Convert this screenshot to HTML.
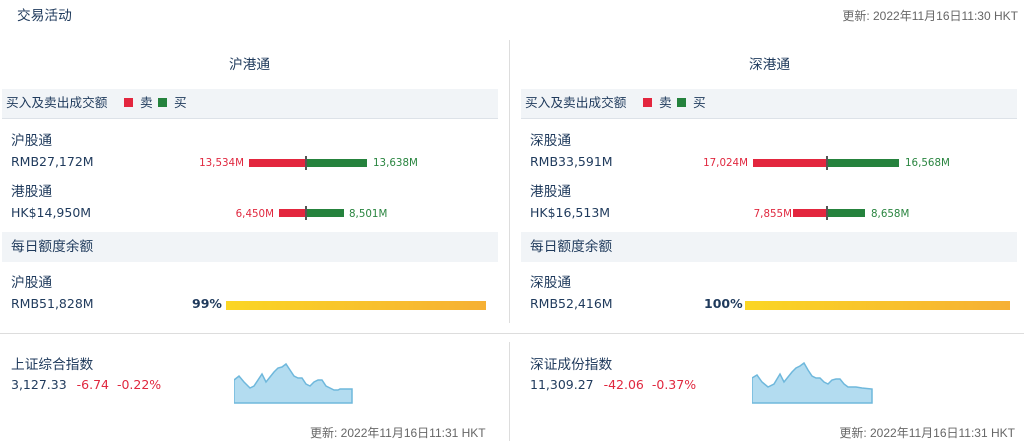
<!DOCTYPE html>
<html><head><meta charset="utf-8"><style>
*{margin:0;padding:0;box-sizing:border-box}
body{width:1024px;height:441px;background:#fff;font-family:"DejaVu Sans","Noto Sans CJK SC",sans-serif;color:#1f3a5c;position:relative;overflow:hidden;font-size:12.5px}
.a{position:absolute;white-space:nowrap;line-height:1}
.c{font-size:13.7px;margin-top:1px}
.band{position:absolute;background:#f1f4f7;height:30px}
.g{color:#666;font-size:12px;font-family:"Liberation Sans","Noto Sans CJK SC",sans-serif}
.r{color:#e0283f}.gr{color:#2a8540}
.sm{font-size:10.3px}
.bar{position:absolute;height:8px}
.red{background:#e3263e}.grn{background:#25823d}
.tick{position:absolute;width:2px;height:14px;background:#555}
.y{position:absolute;height:9px;background:linear-gradient(90deg,#fbd624,#f6b034)}
.vl{position:absolute;width:1px;background:#ddd}
.bl{font-size:12.7px}
</style></head><body>
<div class="a c" style="left:17px;top:9px">交易活动</div>
<div class="a g" style="right:6px;top:10px">更新: 2022年11月16日11:30 HKT</div>

<div class="vl" style="left:509px;top:40px;height:283px"></div>
<div style="position:absolute;left:0;top:333px;width:1024px;height:1px;background:#ddd"></div>
<div class="vl" style="left:509px;top:342px;height:99px"></div>

<!-- left -->
<div class="a c" style="left:229px;top:58px">沪港通</div>
<div class="band" style="left:2px;top:89px;width:496px;border-bottom:1px solid #dde2e8"></div>
<div class="a bl" style="left:6px;top:97px">买入及卖出成交额</div>
<div style="position:absolute;left:124px;top:98px;width:9px;height:9px;background:#e3263e"></div>
<div class="a bl" style="left:140px;top:97px">卖</div>
<div style="position:absolute;left:158px;top:98px;width:9px;height:9px;background:#25823d"></div>
<div class="a bl" style="left:174px;top:97px">买</div>
<div class="a c" style="left:11px;top:134px">沪股通</div>
<div class="a" style="left:11px;top:156px">RMB27,172M</div>
<div class="a sm r" style="right:780px;top:158px">13,534M</div>
<div class="bar red" style="left:249px;top:159px;width:57px"></div>
<div class="bar grn" style="left:306px;top:159px;width:61px"></div>
<div class="tick" style="left:305px;top:156px"></div>
<div class="a sm gr" style="left:373px;top:158px">13,638M</div>
<div class="a c" style="left:11px;top:185px">港股通</div>
<div class="a" style="left:11px;top:207px">HK$14,950M</div>
<div class="a sm r" style="right:750px;top:209px">6,450M</div>
<div class="bar red" style="left:279px;top:209px;width:27px"></div>
<div class="bar grn" style="left:306px;top:209px;width:38px"></div>
<div class="tick" style="left:305px;top:206px"></div>
<div class="a sm gr" style="left:349px;top:209px">8,501M</div>
<div class="band" style="left:2px;top:232px;width:496px"></div>
<div class="a c" style="left:11px;top:240px">每日额度余额</div>
<div class="a c" style="left:11px;top:276px">沪股通</div>
<div class="a" style="left:11px;top:298px">RMB51,828M</div>
<div class="a" style="left:192px;top:298px;font-weight:bold">99%</div>
<div class="y" style="left:226px;top:301px;width:260px"></div>

<!-- right -->
<div class="a c" style="left:749px;top:58px">深港通</div>
<div class="band" style="left:521px;top:89px;width:496px;border-bottom:1px solid #dde2e8"></div>
<div class="a bl" style="left:525px;top:97px">买入及卖出成交额</div>
<div style="position:absolute;left:643px;top:98px;width:9px;height:9px;background:#e3263e"></div>
<div class="a bl" style="left:659px;top:97px">卖</div>
<div style="position:absolute;left:677px;top:98px;width:9px;height:9px;background:#25823d"></div>
<div class="a bl" style="left:693px;top:97px">买</div>
<div class="a c" style="left:530px;top:134px">深股通</div>
<div class="a" style="left:530px;top:156px">RMB33,591M</div>
<div class="a sm r" style="right:276px;top:158px">17,024M</div>
<div class="bar red" style="left:753px;top:159px;width:74px"></div>
<div class="bar grn" style="left:827px;top:159px;width:72px"></div>
<div class="tick" style="left:826px;top:156px"></div>
<div class="a sm gr" style="left:905px;top:158px">16,568M</div>
<div class="a c" style="left:530px;top:185px">港股通</div>
<div class="a" style="left:530px;top:207px">HK$16,513M</div>
<div class="a sm r" style="right:232px;top:209px">7,855M</div>
<div class="bar red" style="left:793px;top:209px;width:34px"></div>
<div class="bar grn" style="left:827px;top:209px;width:38px"></div>
<div class="tick" style="left:826px;top:206px"></div>
<div class="a sm gr" style="left:871px;top:209px">8,658M</div>
<div class="band" style="left:521px;top:232px;width:496px"></div>
<div class="a c" style="left:530px;top:240px">每日额度余额</div>
<div class="a c" style="left:530px;top:276px">深股通</div>
<div class="a" style="left:530px;top:298px">RMB52,416M</div>
<div class="a" style="left:704px;top:298px;font-weight:bold">100%</div>
<div class="y" style="left:745px;top:301px;width:265px"></div>

<!-- bottom -->
<div class="a c" style="left:11px;top:358px">上证综合指数</div>
<div class="a" style="left:11px;top:379px">3,127.33 <span class="r" style="margin-left:6px">-6.74</span> <span class="r" style="margin-left:4px">-0.22%</span></div>
<svg style="position:absolute;left:234px;top:362px" width="120" height="42"><path d="M0,18 L5,14 L10,20 L16,26 L20,24 L28,12 L32,20 L40,10 L44,6 L48,5 L52,2 L56,8 L60,14 L64,16 L68,16 L72,22 L76,24 L80,20 L84,18 L88,18 L92,24 L96,26 L100,28 L104,28 L106,27 L118,27 L118,41 L0,41Z" fill="#b3dcf0" stroke="#6fb8dc" stroke-width="1.5"/></svg>
<div class="a g" style="left:310px;top:427px">更新: 2022年11月16日11:31 HKT</div>

<div class="a c" style="left:530px;top:358px">深证成份指数</div>
<div class="a" style="left:530px;top:379px">11,309.27 <span class="r" style="margin-left:6px">-42.06</span> <span class="r" style="margin-left:4px">-0.37%</span></div>
<svg style="position:absolute;left:752px;top:362px" width="122" height="42"><path d="M0,16 L5,13 L10,20 L16,25 L22,22 L28,12 L32,20 L40,10 L44,6 L48,4 L52,1 L56,8 L60,14 L64,16 L68,16 L72,20 L76,22 L80,18 L84,17 L88,17 L92,22 L96,25 L100,25 L104,25 L110,26 L120,27 L120,41 L0,41Z" fill="#b3dcf0" stroke="#6fb8dc" stroke-width="1.5"/></svg>
<div class="a g" style="right:9px;top:427px">更新: 2022年11月16日11:31 HKT</div>
</body></html>
